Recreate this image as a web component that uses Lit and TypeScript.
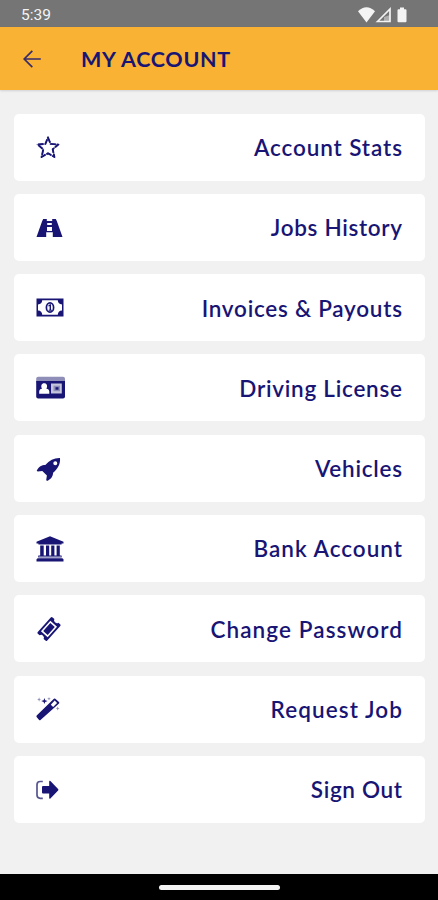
import { LitElement, html, css, svg } from "lit";
import { customElement } from "lit/decorators.js";

const icons = {
  star: svg`<path class="line" stroke-width="1.9" stroke-dasharray="5.500 1.200" stroke-linejoin="round" d="M14 5.5 16.6 11.9 24.3 12.6 18.7 17.3 20.4 25 14 21.2 7.6 25 9.3 17.3 3.7 12.6 11.4 11.9Z"/><path class="line" stroke-width="1.300" opacity=".6" d="M14 5.5 16.6 11.9 24.3 12.6 18.7 17.3 20.4 25 14 21.2 7.6 25 9.3 17.3 3.7 12.6 11.4 11.9Z"/>`,
  binoculars: svg`<path d="M9.2 7h3.6v2h5.4V7h3.6l1.1 2.2L28.5 25h-9.7v-4.7h-6.6V25H2.5L8.1 9.2ZM13.2 11v2h4.6v-2Zm-.2 4v4h5v-4Z" fill-rule="evenodd"/>`,
  money: svg`<path fill-rule="evenodd" d="M2.5 6.5h27v18h-27ZM8.2 8.3A4.4 4.4 0 0 1 4 12.5v6a4.4 4.4 0 0 1 4.2 4.2h15.6a4.4 4.4 0 0 1 4.2-4.2v-6a4.4 4.4 0 0 1-4.2-4.2Z"/><ellipse class="line" cx="16" cy="15.5" rx="3.6" ry="4.7" stroke-width="1.7"/><path d="M14.3 13.5 16 12.3h1v5.5h1v1h-3.4v-1h1v-3.7l-1 .4Z"/>`,
  card: svg`<rect class="soft" x="2.2" y="4.7" width="28.8" height="7" rx="2"/><path d="M2.2 9h28.8v15.5a2 2 0 0 1-2 2H4.2a2 2 0 0 1-2-2Z"/><path class="paper" d="M5.2 21.7v-2.2c0-1.8 1.2-2.6 2.8-2.8-1.5-2.8-.5-5.5 2.2-5.5s3.700 2.700 2.200 5.500c1.600.2 2.900 1 2.900 2.800v2.200Z"/><path class="pale" d="M17 11.500h10.800v10H17Z"/><path class="soft" d="M19.500 13.700h6.500v5.500h-6.500Z"/><path d="M21.500 15.200h3v2.500h-3Z"/>`,
  rocket: svg`<path fill-rule="evenodd" d="M26 5c.5 5.800-2 10.800-6.900 14.700-.2 3.500-1.700 6.100-6.100 8.300l-.8-1 .7-4.600-4.600-4.300-4.600.5-1-.9C5 13.500 7.600 12 11.300 12 15.500 7.200 20.300 4.800 26 5Zm-4.700 3.300a2 2 0 1 0 0 4 2 2 0 0 0 0-4Z"/>`,
  bank: svg`<path d="M16 3.300 29.500 8.700v1.900h-1.900v1H4.400v-1H2.500V8.700ZM6.200 12.500h3.500v10H12v-10h3.200v10h2v-10h3.200v10h2.200v-10h3.200v10h1.800v2H4.300v-2h1.900ZM2.500 26.300l1.200-1h24.600l1.200 1v2.200h-27Z"/><path class="pale" d="M5 23.500h22v.9H5Z"/>`,
  ticket: svg`<g transform="rotate(-48 15 16)"><path fill-rule="evenodd" d="M5.300 9.600h19.400a1.300 1.300 0 0 1 1.300 1.300v2.400a2.800 2.800 0 0 0 0 5.400v2.400a1.300 1.300 0 0 1-1.300 1.300H5.300A1.300 1.300 0 0 1 4 21.100v-2.400a2.800 2.800 0 0 0 0-5.400v-2.400a1.300 1.300 0 0 1 1.300-1.300ZM8 11.500v9h14v-9Z"/><rect x="9.700" y="13" width="10.600" height="6"/></g>`,
  wand: svg`<path fill-rule="evenodd" d="m21.300 4.700 3.700 3.300q.7.700 0 1.400L6.500 26q-.7.500-1.400-.1L2.600 23q-.5-.7.100-1.400L19.900 4.700q.7-.6 1.400 0ZM16.800 10.700l2.300 2.200 4-4L20.700 6.600Z"/><path d="m10.400 4.100.8 2.200 2.400.8-2.400.8-.8 2.200-.8-2.200-2.400-.8 2.400-.8Z"/><path class="soft" d="M5.100 3.300 5.700 5l1.400.5-1.400.6-.6 1.600-.6-1.600-1.400-.6L4.500 5ZM15 3l.5 1.300 1.300.5-1.300.5L15 6.600l-.5-1.300-1.300-.5 1.300-.5ZM23.700 12.600l.6 1.400 1.400.5-1.400.6-.6 1.500-.6-1.500-1.400-.6 1.400-.5Z"/>`,
  exit: svg`<path class="line soft-line" d="M8.800 7.500H6.200Q3 7.500 3 10.700v10.400q0 3.200 3.200 3.200h2.600" stroke-width="1.700"/><path d="M9 12h6.200V7.600q.1-1.300 1.200-.5l7.700 7.900q.7.800 0 1.600l-7.700 7.900q-1.100.8-1.200-.5v-4.400H9Q8 19.600 8 18.600V13q0-1 1-1Z"/>`,
};

const menu = [
  { label: "Account Stats", icon: icons.star, tracking: 0.9 },
  { label: "Jobs History", icon: icons.binoculars, tracking: 0.68 },
  { label: "Invoices & Payouts", icon: icons.money, tracking: 0.75 },
  { label: "Driving License", icon: icons.card, tracking: 0.75 },
  { label: "Vehicles", icon: icons.rocket, tracking: 0.75 },
  { label: "Bank Account", icon: icons.bank, tracking: 1 },
  { label: "Change Password", icon: icons.ticket, tracking: 1.1 },
  { label: "Request Job", icon: icons.wand, tracking: 1.1 },
  { label: "Sign Out", icon: icons.exit, tracking: 0.65 },
];

@customElement("app-root")
export class AppRoot extends LitElement {
  static styles = css`
    :host {
      display: flex;
      flex-direction: column;
      height: 900px;
      background: #f1f1f1;
      color: #181575;
      font-family: Lato, "Liberation Sans", sans-serif;
    }
    * { box-sizing: border-box; }
    svg { display: block; fill: currentColor; flex: none; }
    .status {
      display: flex;
      align-items: center;
      justify-content: space-between;
      height: 27px;
      padding: 2px 30px 0 21px;
      background: #757575;
      color: #f4f4f4;
      font: 400 15.500px/26px Roboto, sans-serif;
    }
    .header {
      display: flex;
      align-items: center;
      height: 63px;
      padding-left: 22px;
      background: #f9b233;
      box-shadow: 0 1px 2px #0002;
    }
    .title {
      margin: 0 0 0 39px;
      font: 700 21.500px/28px Lato, sans-serif;
      letter-spacing: 0.7px;
      white-space: nowrap;
    }
    .menu {
      flex: 1;
      display: flex;
      flex-direction: column;
      gap: 13.3px;
      padding: 23.500px 13px 0 14px;
    }
    .item {
      display: flex;
      align-items: center;
      justify-content: space-between;
      height: 67px;
      flex: none;
      padding: 1px 23px 0 20px;
      border-radius: 5px;
      background: #fff;
    }
    .label { padding-top: 1px; font-size: 22.500px; font-weight: 600; line-height: 28px; white-space: nowrap; }
    .line { fill: none; stroke: currentColor; }
    .soft { fill: #8e8eb8; }
    .pale { fill: #c5c5dc; }
    .paper { fill: #fff; }
    .soft-line { stroke: #55558f; }
    .arrow { opacity: 0.85; }
    .nav {
      display: flex;
      justify-content: center;
      height: 26px;
      padding-top: 11px;
      background: #000;
    }
    .pill { width: 121px; height: 5px; border-radius: 3px; background: #f4f4f4; }
  `;

  render() {
    return html`
      <div class="status">
        <span>5:39</span>
        <svg width="50" height="18" viewBox="0 0 50 18">
          <path d="M0 5.200Q8.500-2.500 17 5.200L8.500 16.500Z" />
          <path class="line" stroke-width="1.700" d="M19.500 15.500 32 3v12.500Z" />
          <path opacity=".45" d="M26 11v4.500h6V9Z" />
          <path d="M39.500 4.200q0-1 1-1H42V1.500h4v1.700h1.500q1 0 1 1v11q0 1-1 1h-7q-1 0-1-1Z" />
        </svg>
      </div>
      <header class="header">
        <svg class="arrow" width="20" height="20" viewBox="0 0 20 20">
          <path class="line" stroke-width="1.700" d="M18.800 10H2.500M10.300 1.800 2.200 10l8.100 8.200" />
        </svg>
        <h1 class="title">MY ACCOUNT</h1>
      </header>
      <nav class="menu">
        ${menu.map(
          (m) => html`<div class="item">
            <svg width="32" height="32" viewBox="0 0 32 32">${m.icon}</svg>
            <span class="label" style="letter-spacing:${m.tracking}px;margin-right:${-m.tracking}px">${m.label}</span>
          </div>`
        )}
      </nav>
      <div class="nav"><div class="pill"></div></div>
    `;
  }
}
